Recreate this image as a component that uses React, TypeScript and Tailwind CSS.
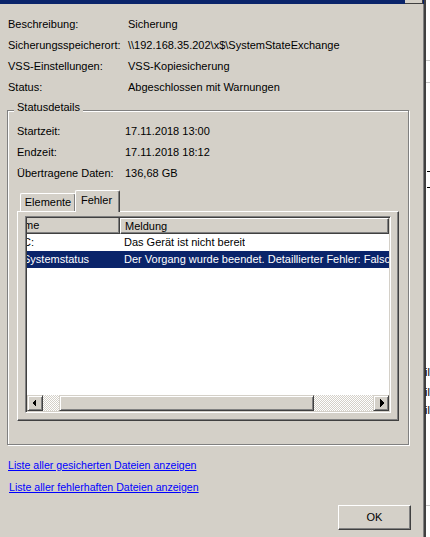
import React from "react";

const raised =
  "border border-t-white border-l-white border-r-[#404040] border-b-[#404040] shadow-[inset_-1px_-1px_0_#808080]";
const scrollBtn =
  "border border-t-[#d4d0c8] border-l-[#d4d0c8] border-r-[#404040] border-b-[#404040] shadow-[inset_1px_1px_0_#fff,inset_-1px_-1px_0_#808080] bg-[#d4d0c8]";

const topRows = [
  ["Beschreibung:", "Sicherung"],
  ["Sicherungsspeicherort:", "\\\\192.168.35.202\\x$\\SystemStateExchange"],
  ["VSS-Einstellungen:", "VSS-Kopiesicherung"],
  ["Status:", "Abgeschlossen mit Warnungen"],
];

const detailRows = [
  ["Startzeit:", "17.11.2018 13:00"],
  ["Endzeit:", "17.11.2018 18:12"],
  ["Übertragene Daten:", "136,68 GB"],
];

const errors = [
  { name: "C:", message: "Das Gerät ist nicht bereit", selected: false },
  {
    name: "Systemstatus",
    message: "Der Vorgang wurde beendet. Detaillierter Fehler: Falsche Funktion.",
    selected: true,
  },
];

function Arrow({ dir }: { dir: "left" | "right" }) {
  return (
    <svg width="14" height="14" viewBox="0 0 14 14" shapeRendering="crispEdges">
      {dir === "left" ? (
        <polygon points="8,3 8,11 4,7" fill="#000" />
      ) : (
        <polygon points="6,3 6,11 10,7" fill="#000" />
      )}
    </svg>
  );
}

function ErrorList() {
  return (
    <div className="flex h-[197px] w-[366px] flex-col overflow-hidden border border-t-[#808080] border-l-[#808080] border-r-white border-b-white bg-white shadow-[inset_1px_1px_0_#404040,inset_-1px_-1px_0_#d4d0c8] p-px">
      {/* header */}
      <div className="flex h-[16px] shrink-0 bg-[#d4d0c8]">
        <div className="flex w-[93px] shrink-0 items-center overflow-hidden whitespace-nowrap border-r border-b border-r-[#404040] border-b-[#404040] shadow-[inset_-1px_-1px_0_#808080]">
          <span className="ml-[-17px]">Name</span>
        </div>
        <div className={`flex flex-1 items-center pl-[4px] ${raised}`}>Meldung</div>
      </div>
      {errors.map((e) => (
        <div
          key={e.name}
          className={`flex h-[17px] shrink-0 items-center whitespace-nowrap ${
            e.selected ? "bg-[#0a246a] text-white" : ""
          }`}
        >
          <div className="w-[93px] shrink-0 overflow-hidden">
            <span className="ml-[-4px] block">{e.name}</span>
          </div>
          <div className="overflow-hidden pl-[4px]">{e.message}</div>
        </div>
      ))}
      <div className="flex-1" />
      {/* horizontal scrollbar */}
      <div className="flex h-[16px] shrink-0">
        <div className={`flex w-[16px] shrink-0 items-center justify-center ${scrollBtn}`}>
          <Arrow dir="left" />
        </div>
        <div className="w-[16px] shrink-0 bg-[image:repeating-conic-gradient(#fff_0_25%,#d4d0c8_0_50%)] bg-[length:2px_2px]" />
        <div className={`w-[255px] shrink-0 ${scrollBtn}`} />
        <div className="flex-1 bg-[image:repeating-conic-gradient(#fff_0_25%,#d4d0c8_0_50%)] bg-[length:2px_2px]" />
        <div className={`flex w-[16px] shrink-0 items-center justify-center ${scrollBtn}`}>
          <Arrow dir="right" />
        </div>
      </div>
    </div>
  );
}

function StatusDetails() {
  return (
    <div className="relative ml-[7px] mt-[12px] h-[335px] w-[402px] shrink-0 border border-[#808080] shadow-[inset_1px_1px_0_#fff,1px_1px_0_#fff]">
      <span className="absolute left-[6px] top-[-9px] bg-[#d4d0c8] px-[3px] leading-[11px]">
        Statusdetails
      </span>
      <div className="flex flex-col pt-[10px]">
        {detailRows.map(([label, value]) => (
          <div key={label} className="flex h-[21px] items-center">
            <div className="w-[117px] shrink-0 pl-[9px]">{label}</div>
            <div>{value}</div>
          </div>
        ))}
      </div>
      {/* tab control */}
      <div className="ml-[9px] mt-[6px] flex w-[382px] flex-col">
        <div className="flex h-[21px] items-end">
          <div className="ml-[3px] flex h-[18px] w-[56px] items-center justify-center rounded-t-[2px] border-l border-t border-white border-r border-r-[#404040] shadow-[inset_-1px_0_0_#808080]">
            Elemente
          </div>
          <div className="relative z-10 mb-[-1px] ml-[-1px] flex h-[22px] w-[45px] items-start justify-center rounded-t-[2px] border-l border-t border-white border-r border-r-[#404040] bg-[#d4d0c8] pt-[4px] pr-[2px] shadow-[inset_-1px_0_0_#808080]">
            Fehler
          </div>
        </div>
        <div className={`h-[210px] pl-[7px] pt-[4px] ${raised}`}>
          <ErrorList />
        </div>
      </div>
    </div>
  );
}

function BackgroundStrip() {
  return (
    <div className="relative h-full flex-1 bg-white">
      <div className="absolute left-0 top-[60px] h-px w-full bg-[#c8c8c8]" />
      <div className="absolute left-0 top-[82px] h-px w-full bg-[#c8c8c8]" />
      <div className="absolute left-[1px] top-[171px] h-px w-[3px] bg-black" />
      <div className="absolute left-[1px] top-[187px] h-px w-[3px] bg-black" />
      <span className="absolute left-[-1px] top-[367px] leading-[11px]">il</span>
      <span className="absolute left-[-1px] top-[387px] leading-[11px]">il</span>
      <span className="absolute left-[-1px] top-[405px] leading-[11px]">il</span>
      <div className="absolute left-0 top-[505px] h-px w-full bg-[#c8c8c8]" />
    </div>
  );
}

export default function App() {
  return (
    <div className="flex h-[537px] w-[430px] overflow-hidden bg-white font-['Liberation_Sans',Arial,sans-serif] text-[11px] leading-none text-black">
      <div className="flex h-full w-[426px] shrink-0 flex-col border-r-2 border-[#404040] bg-[#d4d0c8] shadow-[inset_-1px_0_0_#808080]">
        {/* title bar (cut off) */}
        <div className="flex h-[4px] shrink-0 bg-[#0a246a] pr-px">
          <div className="ml-auto h-[4px] w-[18px] border-b border-r border-[#404040] bg-[#d4d0c8]" />
        </div>
        <div className="mt-[10px] flex flex-col">
          {topRows.map(([label, value]) => (
            <div key={label} className="flex h-[21px] items-center">
              <div className="w-[128px] shrink-0 pl-[8px]">{label}</div>
              <div>{value}</div>
            </div>
          ))}
        </div>
        <StatusDetails />
        <a href="#" className="ml-[8px] mt-[12px] self-start text-[10.6px] leading-[16px] text-[#0000ff] underline">
          Liste aller gesicherten Dateien anzeigen
        </a>
        <a href="#" className="ml-[9px] mt-[6px] self-start text-[10.6px] leading-[16px] text-[#0000ff] underline">
          Liste aller fehlerhaften Dateien anzeigen
        </a>
        <button
          type="button"
          className="ml-[338px] mt-[10px] flex h-[25px] w-[73px] items-center justify-center border border-t-white border-l-white border-r-[#404040] border-b-[#404040] bg-[#d4d0c8] shadow-[inset_-1px_-1px_0_#808080]"
        >
          OK
        </button>
      </div>
      <BackgroundStrip />
    </div>
  );
}
